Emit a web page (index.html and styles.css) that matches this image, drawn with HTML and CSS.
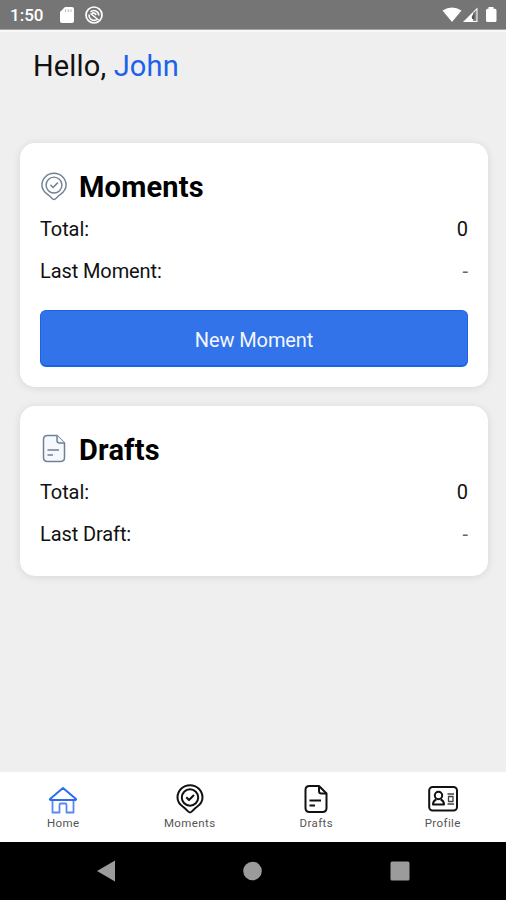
FILE: index.html
```html
<!DOCTYPE html>
<html lang="en">
<head>
    <meta charset="utf-8">
    <title>Moments</title>
    <link rel="stylesheet" href="styles.css">
</head>
<body>
    <!-- shared icon shapes -->
    <svg class="sprite">
        <symbol id="icon-pin" viewBox="0 0 28 30">
            <path d="M14 28.5 C12 28.5 11.5 26 7 22.8 C3 20 1.5 17 1.5 13.5 A12.5 12.3 0 0 1 26.5 13.5 C26.5 17 25 20 21 22.8 C16.5 26 16 28.5 14 28.5 Z"/>
            <circle cx="14" cy="13.5" r="8.2"/>
            <path d="M10.3 13.3 L13 16 L18 11"/>
        </symbol>
        <symbol id="icon-draft" viewBox="0 0 24 29">
            <path d="M15 1.5 H5.5 Q1.5 1.5 1.5 5.5 V23.5 Q1.5 27.5 5.5 27.5 H18.5 Q22.5 27.5 22.5 23.5 V9 Z"/>
            <path d="M15 1.5 V6.5 Q15 9 17.5 9 H22.5 M5.5 16 H17 M5.5 21 H11"/>
        </symbol>
    </svg>

    <header class="status-bar">
        <span class="time">1:50</span>
        <svg class="sd-card" width="14" height="16" viewBox="0 0 14 16">
            <path d="M5 0 H12 Q14 0 14 2 V14 Q14 16 12 16 H2 Q0 16 0 14 V5 Z" fill="#fff"/>
            <path d="M5.5 2.3 V5 M8.2 2.3 V5 M10.9 2.3 V5" stroke="#bbb" stroke-width="1.1"/>
        </svg>
        <svg width="18" height="18" viewBox="0 0 18 18" fill="none" stroke="#fff">
            <circle cx="9" cy="9" r="8" stroke-width="1.7"/>
            <path d="M12.5 13 A5 5 0 0 1 4.2 8.5 M5.5 5.8 A5 5 0 0 1 13.8 9.5" stroke-width="1.6"/>
            <path d="M5.5 7.5 L13.5 14 M6.8 7.3 Q9.5 6 11.3 9" stroke-width="1.6"/>
        </svg>
        <svg class="signals" width="56" height="18" viewBox="0 0 56 18">
            <path d="M0.5 4.5 Q10 -1.5 19.5 4.5 L10 16 Z" fill="#fff"/>
            <path d="M21 16 L35.5 1.5 V16 Z" fill="#fff"/>
            <path d="M31 7 L34.5 4 V15 H31 Z" fill="#858585"/>
            <path d="M29.8 10 L32.5 7.5 V13 H30 Z" fill="#555"/>
            <path d="M46.5 1 H51.5 V2.7 H53 Q54.5 2.7 54.5 4.2 V14.5 Q54.5 16 53 16 H45.5 Q44 16 44 14.5 V4.2 Q44 2.7 45.5 2.7 H46.5 Z" fill="#fff"/>
        </svg>
    </header>

    <main class="content">
        <h1 class="greeting">Hello, <span class="name">John</span></h1>

        <section class="card">
            <h2 class="card-title">
                <svg class="pin-icon"><use href="#icon-pin"/></svg>
                Moments
            </h2>
            <div class="row"><span>Total:</span><span>0</span></div>
            <div class="row"><span>Last Moment:</span><span class="empty">-</span></div>
            <button class="new-button">New Moment</button>
        </section>

        <section class="card">
            <h2 class="card-title">
                <svg class="draft-icon"><use href="#icon-draft"/></svg>
                Drafts
            </h2>
            <div class="row"><span>Total:</span><span>0</span></div>
            <div class="row"><span>Last Draft:</span><span class="empty">-</span></div>
        </section>
    </main>

    <nav class="tab-bar">
        <a class="tab active">
            <svg width="30" height="30" viewBox="0 0 30 30">
                <path d="M15 4 L2 15 Q1.5 16 2.8 16 H27.2 Q28.5 16 28 15 Z"/>
                <path class="thin" d="M4.5 16 V28.5 H11.5 V21 Q11.5 19.5 13 19.5 H17 Q18.5 19.5 18.5 21 V28.5 H25.5 V16"/>
            </svg>
            <span>Home</span>
        </a>
        <a class="tab">
            <svg width="28" height="30"><use href="#icon-pin"/></svg>
            <span>Moments</span>
        </a>
        <a class="tab">
            <svg width="24" height="30"><use href="#icon-draft"/></svg>
            <span>Drafts</span>
        </a>
        <a class="tab">
            <svg width="30" height="30" viewBox="0 0 30 30">
                <rect x="1.2" y="3" width="27.8" height="23.5" rx="3.5"/>
                <circle cx="10.5" cy="11.5" r="3.7"/>
                <path d="M8.3 15.5 Q5 16.8 5 20.6 H16 Q16 16.8 12.7 15.5"/>
                <path class="thin" d="M19.5 10 H26 M20.5 12.5 H25 V17.5 H20.5 Z M19.5 20 H26"/>
            </svg>
            <span>Profile</span>
        </a>
    </nav>

    <footer class="system-nav">
        <svg width="18" height="22" viewBox="0 0 18 22"><path d="M0 11 L18 0.5 V21.5 Z"/></svg>
        <svg width="19" height="22" viewBox="0 0 19 22"><circle cx="9.5" cy="11" r="9.3"/></svg>
        <svg width="20" height="22" viewBox="0 0 20 22"><rect x="0.5" y="1.5" width="19" height="19" rx="1.5"/></svg>
    </footer>
</body>
</html>
```

FILE: styles.css
```css
* {
    box-sizing: border-box;
}
body {
    margin: 0;
    height: 900px;
    display: flex;
    flex-direction: column;
    font-family: Roboto, Arial, sans-serif;
    background-color: #efefef;
    color: #111;
    overflow: hidden;
}
svg {
    flex-shrink: 0;
}
.sprite {
    display: none;
}
.status-bar {
    height: 30px;
    padding: 0 8px 0 10px;
    display: flex;
    align-items: center;
    background-color: #757575;
    border-bottom: 1px solid #a5a5a5;
    color: #fff;
}
.time {
    width: 50px;
    font-size: 17px;
    font-weight: 500;
}
.sd-card {
    margin-right: 11px;
}
.signals {
    margin-left: auto;
}
.content {
    flex: 1;
    padding: 17px 18px 0 20px;
    border-top: 2px solid #f8f8f8;
}
.greeting {
    margin: 0 0 59px 13px;
    font-size: 29px;
    font-weight: 400;
    line-height: 35px;
    letter-spacing: 0.15px;
}
.name {
    color: #1c62ea;
}
.card {
    margin-bottom: 19px;
    padding: 26px 20px 20px;
    border-radius: 15px;
    background-color: #fff;
    box-shadow: 0 1px 8px rgba(0, 0, 0, 0.1);
}
.card-title {
    display: flex;
    align-items: center;
    margin: 0 0 12px;
    font-size: 29px;
    font-weight: 700;
    line-height: 36px;
    letter-spacing: 0.2px;
    color: #000;
}
.pin-icon,
.draft-icon {
    width: 28px;
    height: 29px;
    margin-right: 11px;
    fill: none;
    stroke: #718096;
    stroke-width: 1.5;
}
.pin-icon {
    margin-bottom: 2px;
}
.draft-icon {
    margin-bottom: 3px;
    fill: #f5f8fd;
}
.row {
    display: flex;
    justify-content: space-between;
    margin-bottom: 18px;
    font-size: 20px;
    line-height: 24px;
    letter-spacing: -0.1px;
}
.empty {
    color: #666;
}
.card:last-child .row:last-child {
    margin-bottom: 10px;
}
.new-button {
    display: block;
    width: 100%;
    height: 57px;
    margin-top: 27px;
    padding: 4px 0 0;
    border: 1px solid #1a63e6;
    border-bottom-width: 2px;
    border-radius: 6px;
    background-color: #3273ea;
    color: #f3f7ff;
    font-family: inherit;
    font-size: 20px;
    letter-spacing: -0.1px;
}
.tab-bar {
    height: 70px;
    display: grid;
    grid-template-columns: repeat(4, 1fr);
    padding-top: 12px;
    background-color: #fff;
}
.tab {
    display: flex;
    flex-direction: column;
    align-items: center;
    font-size: 11.5px;
    line-height: 18px;
    letter-spacing: 0.4px;
    color: #555;
}
.tab svg {
    fill: none;
    stroke: #111;
    stroke-width: 2;
    stroke-linejoin: round;
}
.tab .thin {
    stroke-width: 1.3;
    opacity: 0.8;
}
.active svg {
    stroke: #2c6cf0;
}
.active .thin {
    stroke-width: 1.8;
}
.system-nav {
    height: 58px;
    display: flex;
    align-items: center;
    justify-content: space-between;
    padding: 0 96px 0 97px;
    background-color: #000;
    fill: #9b9b9b;
}
```
